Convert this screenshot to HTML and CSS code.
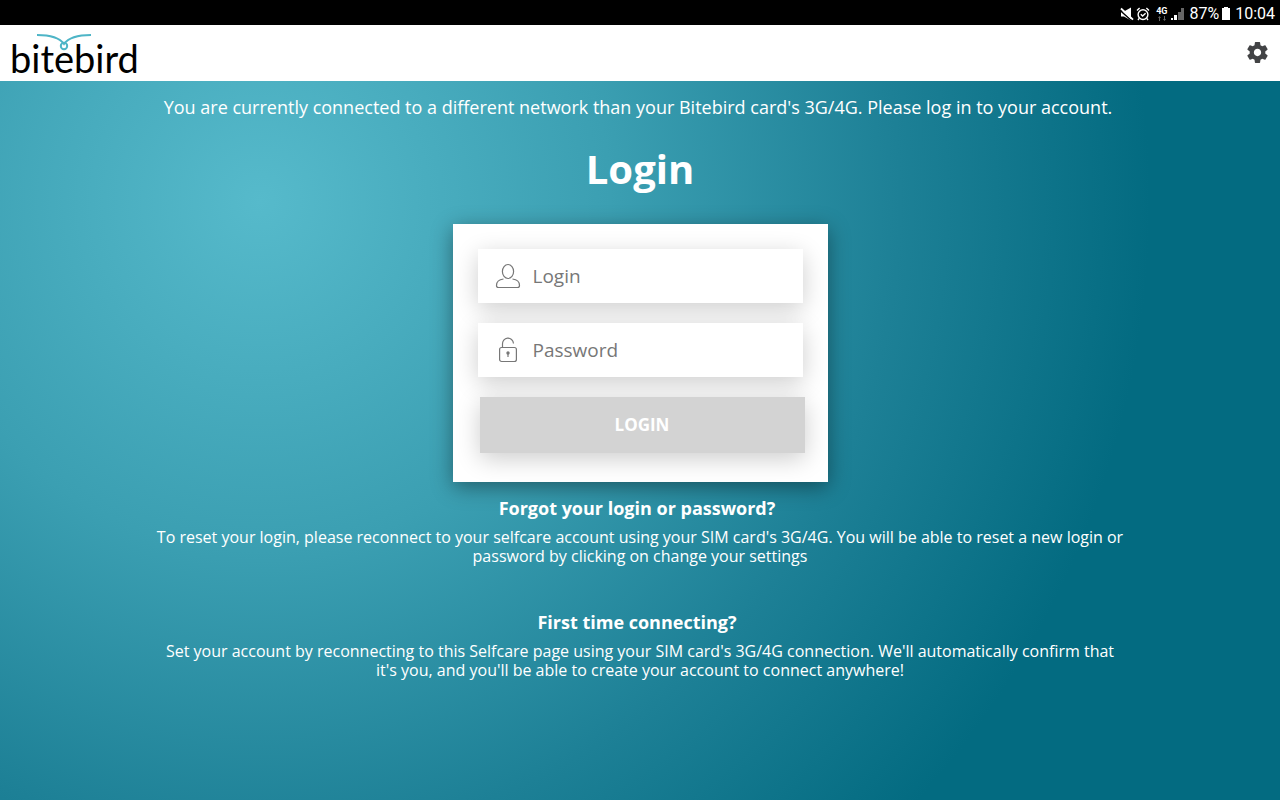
FILE: index.html
```html
<!DOCTYPE html>
<html lang="en">

<head>
    <meta charset="UTF-8">
    <meta name="viewport" content="width=device-width, initial-scale=1.0">
    <title>Bitebird - Login</title>
    <link rel="stylesheet" href="styles.css">
</head>

<body>
    <div class="status-bar">
        <svg class="status-icon" width="14" height="14" viewBox="0 0 14 14">
            <path d="M1 4.500h3l7-4v13L4 9.500H1z" fill="#fff" />
            <path d="M0 3.200 12 14" stroke="#000" stroke-width="1.400" />
            <path d="M1 1.500 13 12.600" stroke="#fff" stroke-width="1.800" />
        </svg>
        <svg class="status-icon" width="14" height="14" viewBox="0 0 14 14" fill="none" stroke="#fff" stroke-width="1.4">
            <circle cx="7" cy="7.6" r="4.9" />
            <path d="M1 3.4 3.6 1M13 3.4 10.4 1M3.2 11.4 2 13M10.8 11.4 12 13M4.8 7.2 6.6 9l3-2.8" />
        </svg>
        <div class="network">
            <span>4G</span>
            <svg width="8" height="5" viewBox="0 0 8 5" fill="#666">
                <path d="M0 2 1.500 0 3 2H2v3H1V2zM5 3h1V0h1v3h1L6.500 5z" />
            </svg>
        </div>
        <svg class="signal" width="13" height="13" viewBox="0 0 13 13">
            <path d="M0 11h2v2H0zM3 8h3v5H3z" fill="#fff" />
            <path d="M7 5h3v8H7zM10 1h3v12h-3z" fill="#666" />
        </svg>
        <span>87%</span>
        <svg class="battery" width="8" height="13" viewBox="0 0 8 13" fill="#fff">
            <path d="M2 0h4v1h2v12H0V1h2z" />
        </svg>
        <span>10:04</span>
    </div>

    <header class="navbar">
        <a href="#" class="logo">
            <svg class="logo-bird" width="56" height="18" viewBox="0 0 56 18" fill="none" stroke="#4eb5c7" stroke-width="2">
                <path d="M1 2C14 2 23 4 28 11C33 4 42 2 55 2" />
                <circle cx="28" cy="13" r="3.200" />
            </svg>
            <span class="logo-text">bitebird</span>
        </a>
        <button class="settings-btn" aria-label="Settings">
            <svg width="25" height="25" viewBox="0 0 24 24" fill="#424345">
                <path d="M19.430 12.980c.04-.32.07-.64.07-.98s-.03-.66-.07-.98l2.110-1.650c.19-.15.24-.42.12-.64l-2-3.460c-.12-.22-.39-.3-.61-.22l-2.490 1c-.52-.4-1.080-.73-1.690-.98l-.38-2.650C14.460 2.180 14.250 2 14 2h-4c-.25 0-.46.18-.49.42l-.38 2.650c-.61.25-1.170.59-1.690.98l-2.490-1c-.23-.09-.49 0-.61.22l-2 3.460c-.13.22-.07.49.12.64l2.110 1.650c-.04.32-.07.65-.07.98s.03.66.07.98l-2.110 1.650c-.19.15-.24.42-.12.64l2 3.460c.12.22.39.3.61.22l2.490-1c.52.4 1.080.73 1.690.98l.38 2.650c.03.24.24.42.49.42h4c.25 0 .46-.18.49-.42l.38-2.650c.61-.25 1.170-.59 1.690-.98l2.490 1c.23.09.49 0 .61-.22l2-3.460c.12-.22.07-.49-.12-.64l-2.110-1.650zM12 15.500c-1.930 0-3.500-1.570-3.500-3.500s1.570-3.500 3.500-3.500 3.500 1.570 3.500 3.500-1.570 3.500-3.500 3.500z" />
            </svg>
        </button>
    </header>

    <main class="content">
        <p class="notice">You are currently connected to a different network than your Bitebird card's 3G/4G. Please log in to your account.</p>
        <h1>Login</h1>

        <form class="login-card">
            <label class="field">
                <svg width="26" height="26" viewBox="0 0 26 26" fill="none" stroke="#777" stroke-width="1.2">
                    <ellipse cx="13" cy="8.500" rx="5.600" ry="7" />
                    <path d="M8.500 16C4 16.500 1.500 19 1.500 22.500Q1.500 24.500 3.500 24.500H22.500Q24.500 24.500 24.500 22.500C24.500 19 22 16.500 17.500 16" />
                </svg>
                <input type="text" placeholder="Login" aria-label="Login">
            </label>
            <label class="field">
                <svg width="26" height="26" viewBox="0 0 26 26" fill="none" stroke="#777" stroke-width="1.2">
                    <rect x="4.600" y="10.500" width="16.800" height="14" rx="2" />
                    <path d="M7.500 10.500V7.500a5.500 5.900 0 0 1 11 -1" />
                    <path d="M13 15.500v4.500" stroke-width="1.200" />
                    <circle cx="13" cy="16" r="1.700" fill="#777" stroke="none" />
                </svg>
                <input type="password" placeholder="Password" aria-label="Password">
            </label>
            <button type="submit" class="login-btn">LOGIN</button>
        </form>

        <section class="help">
            <h2>Forgot your login or password?</h2>
            <p>To reset your login, please reconnect to your selfcare account using your SIM card's 3G/4G. You will be able to reset a new login or password by clicking on change your settings</p>
        </section>
        <section class="help">
            <h2>First time connecting?</h2>
            <p>Set your account by reconnecting to this Selfcare page using your SIM card's 3G/4G connection. We'll automatically confirm that it's you, and you'll be able to create your account to connect anywhere!</p>
        </section>
    </main>
</body>

</html>
```
FILE: styles.css
```css
/* Basic reset */
* {
    margin: 0;
    padding: 0;
    box-sizing: border-box;
}

body {
    min-height: 100vh;
    display: flex;
    flex-direction: column;
    font-family: 'Open Sans', sans-serif;
    color: #fff;
}

/* Status bar */
.status-bar {
    display: flex;
    align-items: center;
    justify-content: flex-end;
    height: 25px;
    padding: 2px 5px 0;
    background: #000;
    font-family: Roboto, sans-serif;
    font-size: 16px;
}

.status-icon {
    margin-right: 2px;
}

.network {
    display: flex;
    flex-direction: column;
    align-items: center;
    margin: 0 4px;
    font-size: 9px;
    font-weight: bold;
    line-height: 9px;
}

.signal {
    margin-right: 5px;
}

.battery {
    margin: 0 5px 0 3px;
}

/* Navbar */
.navbar {
    display: flex;
    justify-content: space-between;
    align-items: center;
    height: 56px;
    padding: 0 10px;
    background: #fff;
}

.logo {
    position: relative;
    color: #000;
    text-decoration: none;
}

.logo-text {
    display: block;
    padding-top: 10px;
    font-family: Lato, sans-serif;
    font-size: 38px;
    line-height: 36px;
}

.logo-bird {
    position: absolute;
    top: 3px;
    left: 26px;
}

.settings-btn {
    display: flex;
    padding-bottom: 2px;
    border: none;
    background: none;
    cursor: pointer;
}

/* Page */
.content {
    flex: 1;
    display: flex;
    flex-direction: column;
    align-items: center;
    padding: 14px 155px;
    text-align: center;
    background: radial-gradient(circle at 260px 120px, #56bacb 0, #3b9fb2 350px, #1d8096 640px, #036b81 890px);
}

.notice {
    padding-right: 4px;
    font-size: 18px;
    line-height: 24px;
}

h1 {
    margin: 21px 0 26px;
    font-size: 40px;
    line-height: 58px;
}

.login-card {
    display: flex;
    flex-direction: column;
    gap: 20px;
    width: 375px;
    padding: 25px 25px 29px;
    background: #fff;
    box-shadow: 0 5px 20px rgba(0, 0, 0, 0.4);
}

.field {
    display: flex;
    align-items: center;
    height: 54px;
    padding: 0 17px;
    background: #fff;
    box-shadow: 0 6px 24px rgba(0, 0, 0, 0.2);
}

.field input {
    flex: 1;
    min-width: 0;
    margin-left: 12px;
    border: none;
    outline: none;
    background: none;
    font-family: inherit;
    font-size: 19px;
    color: #777;
}

.field input::placeholder {
    color: #777;
}

.login-btn {
    height: 56px;
    margin: 0 -2px 0 2px;
    padding-bottom: 2px;
    border: none;
    background: #d3d3d3;
    color: #fff;
    font-family: inherit;
    font-size: 17px;
    font-weight: bold;
    box-shadow: 0 6px 24px rgba(0, 0, 0, 0.2);
}

/* Help texts */
.help {
    margin: 14px 0 30px;
}

.help h2 {
    margin-bottom: 8px;
    padding-right: 6px;
    font-size: 18px;
    line-height: 24px;
}

.help p {
    font-size: 16px;
    line-height: 19px;
}
```
